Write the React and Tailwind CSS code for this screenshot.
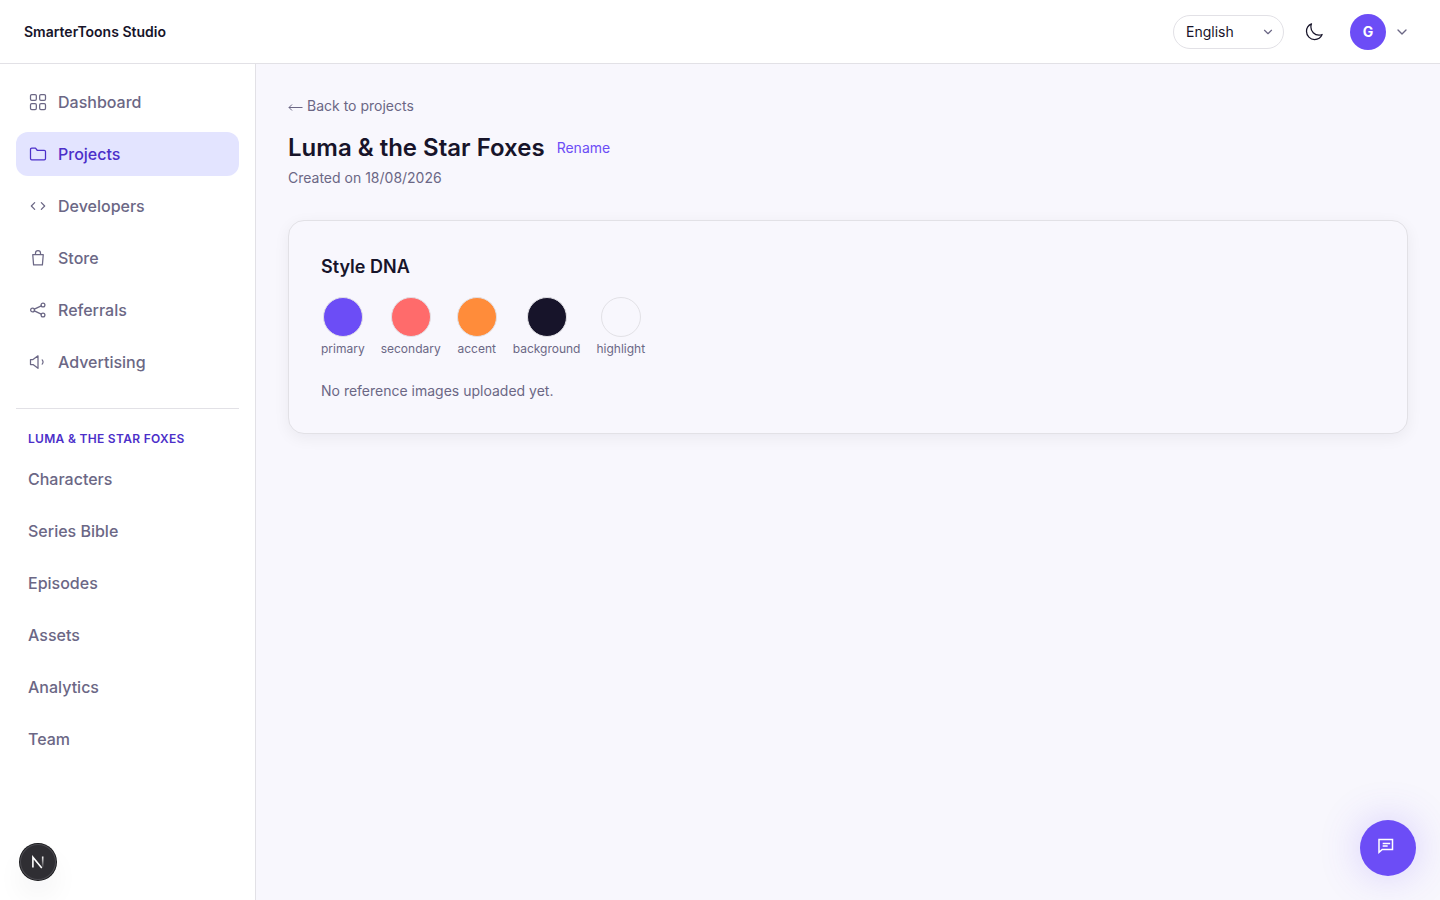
const stroke = {
  fill: 'none',
  stroke: 'currentColor',
  strokeWidth: 1.5,
  strokeLinecap: 'round',
  strokeLinejoin: 'round',
  viewBox: '0 0 24 24',
  'aria-hidden': true,
}

const icons = {
  dashboard: (
    <>
      <rect x="3" y="3" width="7" height="7" rx="1.5" />
      <rect x="14" y="3" width="7" height="7" rx="1.5" />
      <rect x="3" y="14" width="7" height="7" rx="1.5" />
      <rect x="14" y="14" width="7" height="7" rx="1.5" />
    </>
  ),
  projects: <path d="M3 6.5A1.5 1.5 0 0 1 4.5 5H9l2 2.500h8.500A1.500 1.500 0 0 1 21 9v8.500a1.500 1.500 0 0 1-1.500 1.500h-15A1.500 1.500 0 0 1 3 17.500z" />,
  developers: <path d="M8 8l-4 4 4 4M16 8l4 4-4 4" />,
  store: <path d="M5.700 8h12.600l-1 12.300H6.700L5.700 8zM9 8V6a3 3 0 0 1 6 0v2" />,
  referrals: (
    <>
      <circle cx="5.500" cy="12" r="2.300" />
      <circle cx="18" cy="6" r="2.300" />
      <circle cx="18" cy="18" r="2.300" />
      <path d="M7.600 11l8.300-4M7.600 13l8.300 4" />
    </>
  ),
  advertising: <path d="M3 9v6h3l6 4.500v-15L6 9H3zM17 9.500a3.500 3.500 0 0 1 0 5" />,
}

const mainLinks = [
  ['Dashboard', 'dashboard'],
  ['Projects', 'projects'],
  ['Developers', 'developers'],
  ['Store', 'store'],
  ['Referrals', 'referrals'],
  ['Advertising', 'advertising'],
]

const projectLinks = ['Characters', 'Series Bible', 'Episodes', 'Assets', 'Analytics', 'Team']

const swatches = [
  ['primary', 'bg-[#6c4df6]'],
  ['secondary', 'bg-[#ff6b6b]'],
  ['accent', 'bg-[#ff8c3a]'],
  ['background', 'bg-[#17142a]'],
  ['highlight', 'bg-[#f8f7fd]'],
]

function Chevron({ className }) {
  return (
    <svg {...stroke} strokeWidth={2} className={className}>
      <path d="M6 9l6 6 6-6" />
    </svg>
  )
}

function Header() {
  return (
    <header className="flex h-16 items-center justify-between border-b border-[#e2e1e6] bg-white px-6">
      <a href="#" className="text-sm font-semibold">SmarterToons Studio</a>
      <div className="flex items-center gap-3">
        <div className="grid items-center">
          <select
            aria-label="Language"
            className="col-start-1 row-start-1 h-[34px] w-[111px] appearance-none rounded-full border border-[#e2e1e6] bg-white pl-3 pr-8 text-sm"
          >
            <option>English</option>
          </select>
          <Chevron className="pointer-events-none col-start-1 row-start-1 mr-[9px] size-3.5 justify-self-end text-[#6b6785]" />
        </div>
        <button type="button" aria-label="Toggle dark mode" className="flex size-9 items-center justify-center rounded-full">
          <svg {...stroke} className="size-5">
            <path d="M21.752 15.002A9.720 9.720 0 0 1 18 15.750c-5.385 0-9.750-4.365-9.750-9.750 0-1.330.266-2.597.748-3.752A9.753 9.753 0 0 0 3 11.250C3 16.635 7.365 21 12.750 21a9.753 9.753 0 0 0 9.002-5.998Z" />
          </svg>
        </button>
        <button type="button" aria-label="Account menu" className="flex items-center gap-2 px-1.5">
          <span className="flex size-9 items-center justify-center rounded-full bg-[#6c4df6] text-sm font-bold text-white">G</span>
          <Chevron className="size-4 text-[#6b6785]" />
        </button>
      </div>
    </header>
  )
}

function Sidebar() {
  return (
    <aside className="w-64 shrink-0 border-r border-[#e2e1e6] bg-white p-4 font-medium text-[#6b6785]">
      <nav aria-label="Main" className="flex flex-col gap-2">
        {mainLinks.map(([label, icon]) => (
          <a
            key={label}
            href="#"
            aria-current={label === 'Projects' ? 'page' : undefined}
            className="flex h-11 items-center gap-2.5 rounded-xl px-3 aria-[current=page]:bg-[#e3e4ff] aria-[current=page]:text-[#4c2fc9]"
          >
            <svg {...stroke} className="size-5">{icons[icon]}</svg>
            {label}
          </a>
        ))}
      </nav>
      <div className="mt-6 border-t border-[#e2e1e6] pt-5">
        <h2 className="mb-2 px-3 text-xs leading-5 font-semibold tracking-wide text-[#4c2fc9] uppercase">Luma &amp; the Star Foxes</h2>
        <nav aria-label="Project" className="flex flex-col gap-2">
          {projectLinks.map((label) => (
            <a key={label} href="#" className="flex h-11 items-center rounded-xl px-3">{label}</a>
          ))}
        </nav>
      </div>
    </aside>
  )
}

export default function App() {
  return (
    <div className="flex min-h-screen flex-col bg-[#f8f7fd] font-[Inter,sans-serif] text-[#17142a]">
      <Header />
      <div className="flex flex-1">
        <Sidebar />
        <main className="min-w-0 flex-1 p-8">
          <a href="#" className="flex items-center gap-1 text-sm text-[#6b6785]">
            <svg viewBox="0 0 15 14" className="h-3.5 w-[15px]" fill="none" stroke="currentColor" aria-hidden="true">
              <path d="M1 8.500h13.500M4 5.500l-3 3 3 3" />
            </svg>
            Back to projects
          </a>
          <div className="mt-4 flex items-center gap-3">
            <h1 className="text-2xl font-semibold">Luma &amp; the Star Foxes</h1>
            <button type="button" className="text-sm text-[#6c4df6]">Rename</button>
          </div>
          <p className="mt-1 text-sm text-[#6b6785]">Created on 18/08/2026</p>
          <section className="mt-8 rounded-2xl border border-[#e2e1e6] bg-[#f8f7fd] p-8 shadow-[0_4px_16px_rgba(23,20,42,0.06)]">
            <h2 className="text-lg leading-7 font-semibold">Style DNA</h2>
            <ul className="mt-4 flex gap-4">
              {swatches.map(([label, color]) => (
                <li key={label} className="flex flex-col items-center gap-1 text-xs text-[#6b6785]">
                  <span className={`size-10 rounded-full border border-[#e2e1e6] ${color}`} />
                  {label}
                </li>
              ))}
            </ul>
            <p className="mt-6 text-sm text-[#6b6785]">No reference images uploaded yet.</p>
          </section>
        </main>
      </div>
      <button
        type="button"
        aria-label="Open developer tools"
        className="fixed bottom-5 left-5 flex size-9 items-center justify-center rounded-full bg-[#2f2e33] shadow-[0_0_0_1px_#17171a,inset_0_0_0_1px_#4b4a50,0_16px_32px_-8px_rgba(23,20,42,0.16)]"
      >
        <svg viewBox="0 0 14 14" className="size-3.5" fill="none" aria-hidden="true">
          <defs>
            <linearGradient id="fadeDown" x1="0" y1="1" x2="0" y2="13" gradientUnits="userSpaceOnUse">
              <stop stopColor="#fff" />
              <stop offset="1" stopColor="#fff" stopOpacity="0" />
            </linearGradient>
          </defs>
          <path d="M1.900 12.500V2.200l8.900 10.800" stroke="#fff" strokeWidth="1.600" />
          <path d="M11.700 1.500v10.500" stroke="url(#fadeDown)" strokeWidth="1.600" />
        </svg>
      </button>
      <button
        type="button"
        aria-label="Open chat"
        className="fixed right-6 bottom-6 flex size-14 items-center justify-center rounded-full bg-[#6c4df6] pr-1 pb-1 text-white shadow-[0_0_40px_rgba(108,77,246,0.25)]"
      >
        <svg {...stroke} strokeWidth={1.8} strokeLinecap="butt" strokeLinejoin="miter" className="size-5">
          <path d="M3.600 4.200h16.200v12H7.500l-3.900 3.400zM8 9h9M8 12h6" />
        </svg>
      </button>
    </div>
  )
}
